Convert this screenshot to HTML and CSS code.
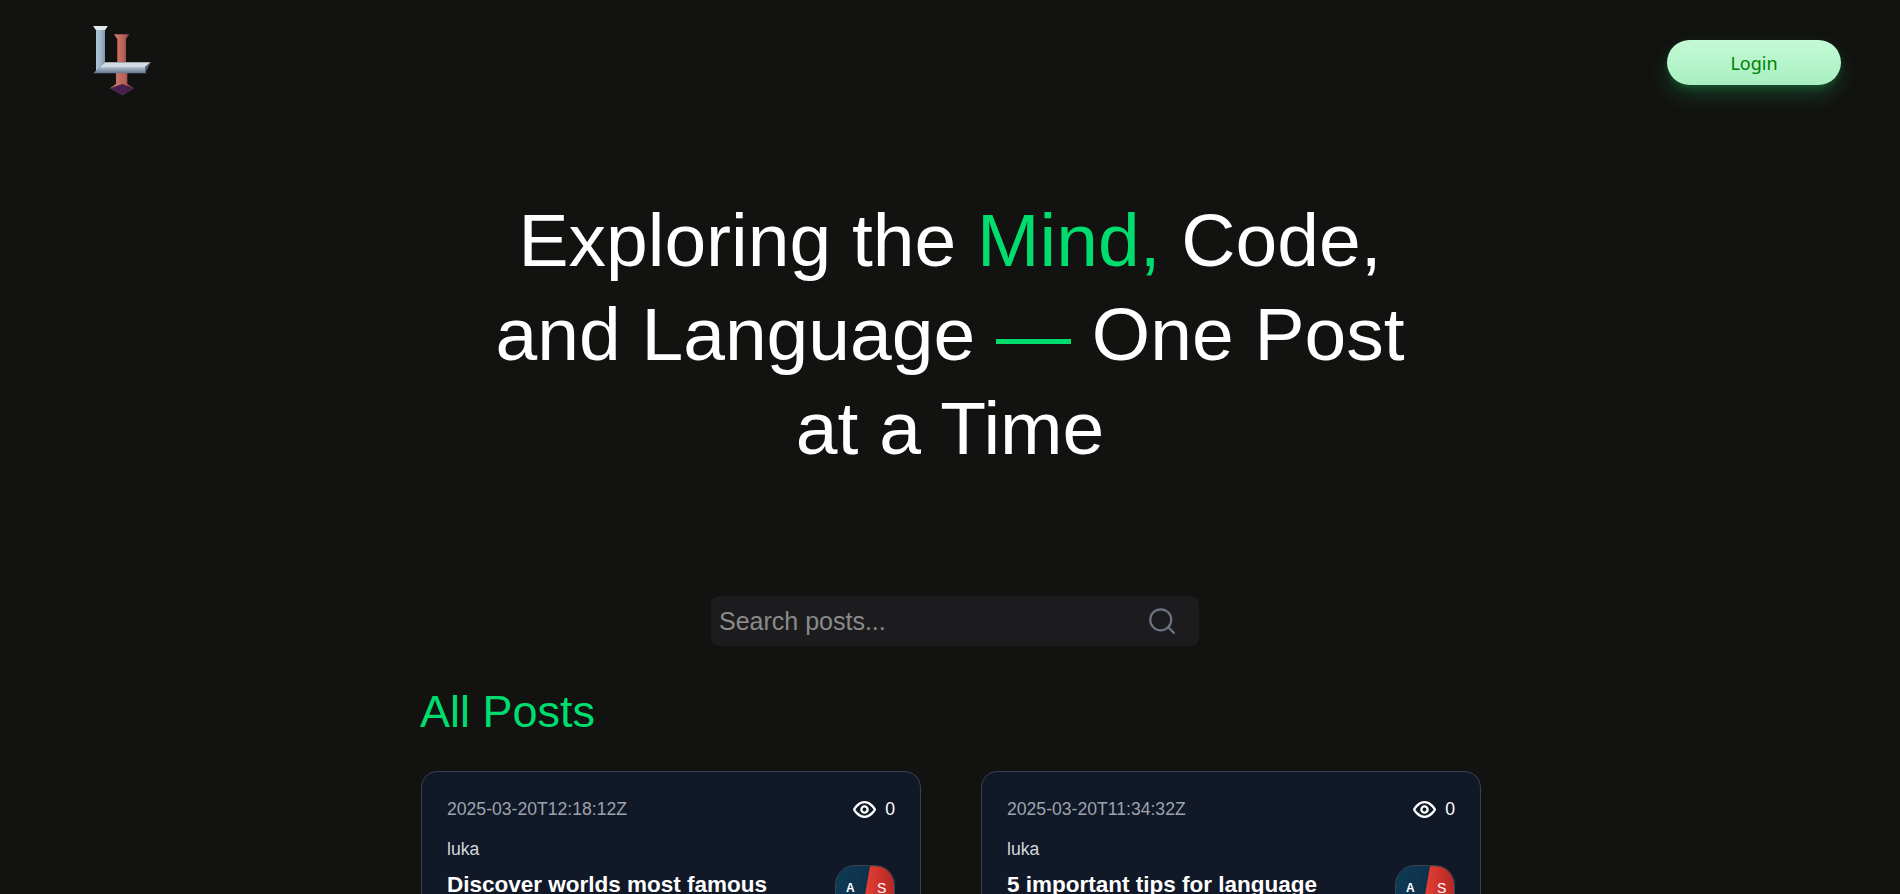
FILE: index.html
```html
<!DOCTYPE html>
<html lang="en">
<head>
<meta charset="utf-8">
<title>Blog</title>
<link rel="stylesheet" href="styles.css">
</head>
<body>
<div class="page">
  <header class="nav">
    <a class="logo" aria-label="Home">
      <svg width="60" height="72" viewBox="0 0 60 72">
        <defs>
          <linearGradient id="steel" x1="0" y1="0" x2="1" y2="0">
            <stop offset="0" stop-color="#b7cadb"/><stop offset=".55" stop-color="#9fb5c9"/><stop offset="1" stop-color="#6b7f94"/>
          </linearGradient>
          <linearGradient id="foot" x1="0" y1="0" x2="0" y2="1">
            <stop offset="0" stop-color="#b6c4d2"/><stop offset="1" stop-color="#61748a"/>
          </linearGradient>
          <linearGradient id="red" x1="0" y1="0" x2="1" y2="0">
            <stop offset="0" stop-color="#d67e70"/><stop offset=".6" stop-color="#b96258"/><stop offset="1" stop-color="#7f4243"/>
          </linearGradient>
        </defs>
        <path d="M21 10.3H36.3L33 15V38H24.3V15Z" fill="url(#red)"/>
        <path d="M23 49H34.3V60L41 64.3L29.3 71L17 64.3L23 60Z" fill="url(#red)"/>
        <path d="M17 64.3L29.3 60L41 64.3L29.3 71Z" fill="#47204f"/>
        <path d="M0.3 2H14.7L12 6V38.3L3 47V6Z" fill="url(#steel)"/>
        <path d="M0.3 2H14.7L12 6H3Z" fill="#e2e9ef"/>
        <path d="M12 38.3H57.7L52 43H7Z" fill="#d3dde6"/>
        <path d="M0.3 49.3L7 43H52L53 49.3Z" fill="url(#foot)"/>
        <path d="M52 43L57.7 38.3L52 49.3Z" fill="#56687a"/>
      </svg>
    </a>
    <button class="login">Login</button>
  </header>

  <section class="hero">
    <h1 class="headline">Exploring the <span class="accent">Mind,</span> Code,<br>and Language <span class="accent">—</span> One Post<br>at a Time</h1>
  </section>

  <div class="search">
    <input class="search-input" type="text" placeholder="Search posts...">
    <svg class="search-icon" width="30" height="30" viewBox="0 0 24 24" fill="none" stroke="#6b7280" stroke-width="1.8" stroke-linecap="round"><circle cx="11" cy="11" r="8.4"/><path d="M17.2 17.2L21.5 21.5"/></svg>
  </div>

  <main class="posts">
    <h2 class="posts-title">All Posts</h2>
    <div class="grid">
      <article class="card">
        <div class="meta">
          <span class="date">2025-03-20T12:18:12Z</span>
          <span class="views">
            <svg width="25" height="25" viewBox="0 0 24 24" fill="none" stroke="#fff" stroke-width="2.2" stroke-linecap="round" stroke-linejoin="round"><path d="M2 12s3.6-7 10-7 10 7 10 7-3.6 7-10 7-10-7-10-7Z"/><circle cx="12" cy="12" r="3"/></svg>
            0
          </span>
        </div>
        <div class="author">luka</div>
        <div class="title-row">
          <h3 class="title">Discover worlds most famous</h3>
          <div class="badge"><span class="badge-a">A</span><span class="badge-s">S</span></div>
        </div>
      </article>
      <article class="card">
        <div class="meta">
          <span class="date">2025-03-20T11:34:32Z</span>
          <span class="views">
            <svg width="25" height="25" viewBox="0 0 24 24" fill="none" stroke="#fff" stroke-width="2.2" stroke-linecap="round" stroke-linejoin="round"><path d="M2 12s3.6-7 10-7 10 7 10 7-3.6 7-10 7-10-7-10-7Z"/><circle cx="12" cy="12" r="3"/></svg>
            0
          </span>
        </div>
        <div class="author">luka</div>
        <div class="title-row">
          <h3 class="title">5 important tips for language</h3>
          <div class="badge"><span class="badge-a">A</span><span class="badge-s">S</span></div>
        </div>
      </article>
    </div>
  </main>
</div>
</body>
</html>
```
FILE: styles.css
```css
* { box-sizing: border-box; }
html, body { margin: 0; padding: 0; height: 894px; overflow: hidden; background: #121211; }
body { font-family: "Liberation Sans", Arial, sans-serif; color: #fff; }
.page { width: 1900px; }

.nav { display: flex; justify-content: space-between; align-items: flex-start; padding: 24px 59px 0 93px; height: 124px; }
.logo { display: block; height: 72px; }
.logo svg { display: block; }
.login {
  width: 174px; height: 45px; margin-top: 16px; border: 0; border-radius: 23px;
  background: linear-gradient(180deg, #c4fad6 0%, #a8efc0 100%);
  color: #008000; font: 18px "Noto Sans", sans-serif;
  box-shadow: 0 10px 25px -3px rgba(34, 197, 94, .3), 0 4px 8px -2px rgba(34, 197, 94, .25);
}

.hero { display: flex; justify-content: center; padding-top: 70px; }
.headline { margin: 0; width: 950px; font-size: 75px; font-weight: 400; line-height: 93.75px; text-align: center; }
.accent { color: #00dc6e; }

.search {
  display: flex; align-items: center; width: 488px; height: 50px; margin: 121px 0 0 711px;
  padding: 0 22px 0 8px; background: #1c1c1f; border-radius: 8px;
}
.search-input { flex: 1; min-width: 0; background: none; border: 0; outline: 0; padding: 0; color: #fff; font: 25px "Liberation Sans", Arial, sans-serif; }
.search-input::placeholder { color: #8a8a8a; opacity: 1; }

.posts { padding: 40px 0 0 420px; }
.posts-title { margin: 0; color: #00dc6e; font-size: 45px; font-weight: 400; line-height: 52px; }
.grid { display: grid; grid-template-columns: repeat(2, 500px); gap: 60px; margin-top: 33px; margin-left: 1px; }
.card { height: 260px; padding: 25px 25px 0; background: #111827; border: 1px solid #374151; border-radius: 16px; }
.meta { display: flex; justify-content: space-between; align-items: center; height: 24px; }
.date { color: #9ca3af; font-size: 17.6px; }
.views { display: flex; align-items: center; gap: 8px; font-size: 17.6px; color: #fff; }
.author { margin-top: 16px; font-size: 17.6px; line-height: 24px; color: #d1d5db; }
.title-row { display: flex; justify-content: space-between; align-items: flex-start; margin-top: 4px; }
.title { margin: 6px 0 0; font-size: 22.5px; font-weight: 700; line-height: 28px; }
.badge {
  display: flex; width: 60px; height: 60px; overflow: hidden;
  border-radius: 20px; border: 1px solid #374151; font-size: 14px; color: #fff;
  background: linear-gradient(90deg, #0e3a54, #0f2a44);
}
.badge-a { flex: 0 0 24px; padding: 15px 0 0 10px; font-size: 12px; font-weight: 700; }
.badge-a::after { content: ""; display: block; width: 3px; height: 2px; margin: 0 0 0 3px; background: #fff; }
.badge-s {
  flex: 1 0 34px; padding: 14px 0 0 17px;
  background: linear-gradient(90deg, #ef4136, #b32a24);
  clip-path: polygon(10px 0, 100% 0, 100% 100%, 0 100%);
}
```
